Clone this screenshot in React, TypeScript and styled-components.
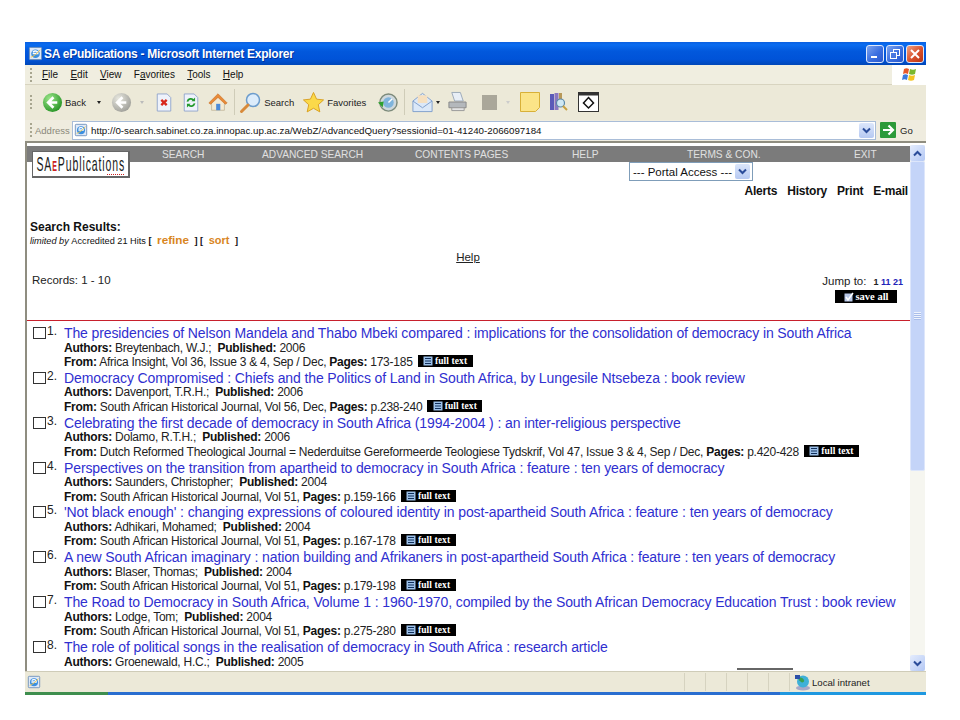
import React from "react";
import styled, { createGlobalStyle } from "styled-components";

const Global = createGlobalStyle`
  html, body { margin: 0; padding: 0; background: #fff; }
  body { font-family: "Liberation Sans", Arial, sans-serif; color: #222; }
`;
const Page = styled.div`
  width: 960px; height: 720px; padding: 42px 34px 0 25px; box-sizing: border-box; overflow: hidden;
`;
const Win = styled.div`
  width: 901px; height: 653px; display: flex; flex-direction: column; background: #ece9d8;
`;
const TitleBar = styled.div`
  height: 23px; flex: none; display: flex; align-items: center; padding: 0 2px 0 3px; box-sizing: border-box;
  background: linear-gradient(180deg, #0a5fe0 0%, #0a6cf0 12%, #0258dc 40%, #0053d8 75%, #0047b8 100%);
`;
const TitleText = styled.div`
  font: bold 12px "Liberation Sans", sans-serif; letter-spacing: -.26px; color: #fff; margin-left: 1px; flex: 1;
  text-shadow: 1px 1px 0 #03339a;
`;
const WinBtns = styled.div` display: flex; gap: 2px; `;
const WinBtn = styled.div<{ $close?: boolean }>`
  width: 18px; height: 18px; box-sizing: border-box; border: 1px solid #dfe8fb; border-radius: 3px; display: flex; align-items: center; justify-content: center;
  background: ${p => p.$close ? "linear-gradient(135deg,#f0a080,#d8502c 55%,#b83414)" : "linear-gradient(135deg,#7ea4ee,#3a6ee0 55%,#2a58cc)"};
`;
const MenuBar = styled.div`
  height: 20px; flex: none; display: flex; align-items: center; font: 10px "Liberation Sans", sans-serif; color: #111;
  border-bottom: 1px solid #d8d4c0; box-sizing: border-box; background: #f0eee0;
`;
const Grip = styled.div`
  width: 2px; height: 14px; margin: 0 10px 0 5px; flex: none;
  background: repeating-linear-gradient(180deg, #a8a690 0 2px, transparent 2px 4px);
`;
const MenuItems = styled.div` display: flex; gap: 12.3px; flex: 1; `;
const MenuItem = styled.span` u { text-decoration: underline; } `;
const Flag = styled.div`
  width: 34px; height: 20px; background: #fff; display: flex; align-items: center; justify-content: center;
`;
const Tools = styled.div`
  height: 35px; flex: none; display: flex; align-items: center; box-sizing: border-box; font: 9.5px "Liberation Sans", sans-serif; color: #222;
  background: #ece9d8; padding-bottom: 1px;
`;
const ToolLabel = styled.span<{ $ml?: number }>` margin-left: ${p => p.$ml ?? 3}px; `;
const Slot = styled.div<{ $w: number; $pl?: number }>`
  width: ${p => p.$w}px; padding-left: ${p => p.$pl ?? 0}px; box-sizing: border-box; flex: none; display: flex; align-items: center; justify-content: center;
`;
const Sep = styled.div` width: 1px; height: 26px; background: #cfccb8; flex: none; `;
const Caret = styled.span<{ $c?: string }>`
  width: 0; height: 0; border: 2.5px solid transparent; border-top: 3px solid ${p => p.$c ?? "#222"}; border-bottom: 0; display: block; flex: none;
`;
const AddressBar = styled.div`
  height: 23px; flex: none; display: flex; align-items: center; font: 9.5px "Liberation Sans", sans-serif; background: #efecdf;
  border-bottom: 2px solid #8f8d80; box-sizing: border-box; padding-bottom: 1px;
`;
const AddrLabel = styled.span` color: #8a887a; width: 35px; flex: none; margin-left: -7px; white-space: nowrap; `;
const AddrInput = styled.div`
  width: 804px; height: 19px; flex: none; box-sizing: border-box; background: #fff; border: 1px solid #a9bdd8; display: flex; align-items: center;
  padding-left: 1px; font: 9.75px "Liberation Sans", sans-serif; color: #111; margin-left: 2px;
`;
const AddrUrl = styled.span` flex: 1; margin-left: 3px; white-space: nowrap; `;
const Combo = styled.div`
  width: 15px; height: 15px; border-radius: 2px; background: linear-gradient(#dbe6fb,#b6c9f2); display: flex; align-items: center; justify-content: center; flex: none;
  margin-right: 1px;
`;
const Go = styled.div` display: flex; align-items: center; gap: 4px; margin-left: 4px; `;
const Body = styled.div`
  flex: 1; min-height: 0; display: flex; background: #fff; border-left: 2px solid #8f8d80; padding-top: 3px; position: relative;
`;
const Content = styled.div` flex: 1; min-width: 0; overflow: hidden; position: relative; `;
const Nav = styled.div`
  height: 16px; background: #7b7b7b; display: flex; color: #e0e0e0; font: 10.2px "Liberation Sans", sans-serif; align-items: center; position: relative;
`;
const NavItem = styled.span<{ $w: number }>` width: ${p => p.$w}px; flex: none; white-space: nowrap; `;
const Logo = styled.div`
  position: absolute; left: 5px; top: 5px; width: 98px; height: 27px; background: #fff; border: 1px solid #666; border-width: 1px 2px 2px 1px; box-sizing: border-box;
  display: flex; align-items: center; justify-content: center; font: 21px "Liberation Sans", sans-serif; color: #1a1a1a;
  overflow: hidden;
`;
const LogoInner = styled.span` display: inline-block; transform: scaleX(.5) scaleY(1); white-space: nowrap; letter-spacing: 1.8px;
  b { color: #c22; font-weight: bold; font-size: 14px; } `;
const LogoDots = styled.span`
  position: absolute; right: 3px; bottom: 1px; width: 18px; height: 1px; background: repeating-linear-gradient(90deg, #c22 0 1px, transparent 1px 2px);
`;
const TopRow = styled.div` height: 20px; display: flex; justify-content: flex-end; padding-right: 157px; `;
const Select = styled.div`
  margin-top: 0; width: 124px; height: 19px; border: 1px solid #7f9db9; box-sizing: border-box; display: flex; align-items: center; justify-content: space-between;
  font: 11.5px "Liberation Sans", sans-serif; color: #111; padding: 0 1px 0 3px; white-space: nowrap;
`;
const Actions = styled.div`
  display: flex; justify-content: flex-end; gap: 10px; padding: 2px 2px 0 0; font: bold 12px "Liberation Sans", sans-serif; color: #111; letter-spacing: -.22px; height: 15px;
`;
const Results = styled.div` padding: 22px 0 0 3px; height: 26px; `;
const ResultsHead = styled.div` font: bold 12px "Liberation Sans", sans-serif; color: #111; line-height: 12px; `;
const Limited = styled.div` font: 9.2px "Liberation Sans", sans-serif; color: #111; line-height: 13px; display: flex; align-items: baseline; white-space: pre;
  i { font-style: italic; } `;
const Refine = styled.span<{ $s: number }>` font: bold ${p => p.$s}px "Liberation Sans", sans-serif; color: #d9861e; margin: 0 3px; `;
const Help = styled.div` text-align: center; font: 11.5px "Liberation Sans", sans-serif; color: #222; text-decoration: underline; padding-top: 4px; height: 18px; margin-left: -1px; `;
const RecordRow = styled.div` display: flex; justify-content: space-between; padding: 0 6px 0 5px; height: 52px; box-sizing: border-box; border-bottom: 1px solid #c8202c; `;
const Records = styled.div` font: 11.5px "Liberation Sans", sans-serif; color: #222; padding-top: 5px; `;
const Jump = styled.div` display: flex; flex-direction: column; align-items: flex-end; padding-top: 6px; font: 11.5px "Liberation Sans", sans-serif; color: #222; `;
const JumpLine = styled.div` display: flex; align-items: baseline; gap: 7px; white-space: nowrap; margin-right: 1px; `;
const JumpNums = styled.span` font: bold 9px "Liberation Sans", sans-serif; color: #2222b8; i { font-style: normal; color: #222; } `;
const SaveAll = styled.div`
  background: #000; color: #fff; font: bold 10.5px "Liberation Serif", serif; height: 13px; width: 62px; display: flex; align-items: center; justify-content: center; gap: 1px;
  margin: 3px 7px 0 0; line-height: 13px;
`;
const List = styled.div` padding-top: 4px; `;
const Row = styled.div`
  height: 44.87px; display: grid; grid-template-columns: 31px 1fr; padding-left: 6px; box-sizing: border-box;
`;
const Check = styled.div` display: flex; align-items: flex-start; font: 12px "Liberation Sans", sans-serif; color: #222; padding-top: 2px; `;
const Box = styled.span` width: 13px; height: 12px; box-sizing: border-box; border: 1px solid #333; display: block; flex: none; background: #fff; `;
const Num = styled.span` line-height: 9px; display: block; margin-left: 1px; `;
const RowBody = styled.div` min-width: 0; white-space: nowrap; `;
const RowTitle = styled.div` font: 14px/17px "Liberation Sans", sans-serif; color: #2f2fd0; letter-spacing: -.11px; height: 15.5px; `;
const RowLine = styled.div` font: 12px/15px "Liberation Sans", sans-serif; color: #222; height: 14.5px; white-space: pre; letter-spacing: -.25px;
  b { color: #111; font-weight: bold; } `;
const FullText = styled.span`
  background: #000; color: #fff; font: bold 9.5px/12px "Liberation Serif", serif; height: 12px; width: 55px; display: inline-flex; align-items: center; justify-content: center; gap: 2px; margin-left: 5px; letter-spacing: .1px; vertical-align: top;
`;
const Scroll = styled.div` width: 15px; flex: none; display: flex; flex-direction: column; background: #f6f6f0; margin-right: 1px; margin-top: -1px; `;
const ScrollBtn = styled.div` height: 16px; flex: none; border-radius: 2px; background: linear-gradient(135deg,#e4ecfd,#b4c8f4); display: flex; align-items: center; justify-content: center; `;
const Thumb = styled.div`
  height: 310px; flex: none; background: #c4d4f8; border: 1px solid #dde6fb; box-sizing: border-box; border-radius: 2px; display: flex; align-items: center; justify-content: center;
`;
const ThumbGrip = styled.div` width: 7px; height: 8px; background: repeating-linear-gradient(180deg, #eef3fd 0 1px, #a9bdea 1px 2px); `;
const Track = styled.div` flex: 1; `;
const Smudge = styled.div` position: absolute; left: 710px; bottom: 1px; width: 56px; height: 2px; background: #666; `;
const Status = styled.div`
  height: 21px; flex: none; display: flex; align-items: center; background: #ece9d8; font: 9.6px "Liberation Sans", sans-serif; color: #222; border-top: 1px solid #cfccb8; box-sizing: border-box;
`;
const StatusMain = styled.div` flex: 1; display: flex; align-items: center; padding-left: 2px; `;
const Cell = styled.div` width: 21px; box-sizing: border-box; height: 18px; border-left: 1px solid #d6d3c0; flex: none; `;
const Zone = styled.div` width: 137px; flex: none; display: flex; align-items: center; gap: 1px; padding-left: 4px; box-sizing: border-box; white-space: nowrap; border-left: 1px solid #d6d3c0; height: 18px; `;
const Bottom = styled.div` height: 3px; flex: none; background: linear-gradient(90deg,#3e8e4e 0 9.2%,#2a6ed0 9.2% 83.8%,#1f98e0 83.8%); `;

const IEIcon = ({ s = 14 }: { s?: number }) => (
  <svg width={s} height={s} viewBox="0 0 16 16"><rect x="1.5" y="1.5" width="13" height="13" rx="1" fill="#dfe9f8" stroke="#6d8fb8" /><circle cx="8" cy="8.3" r="4.6" fill="#3b8fe0" /><path d="M5 8h6.2M5.4 6.5a3 3 0 0 1 5.2.6" stroke="#fff" strokeWidth="1.5" fill="none" /><path d="M3 12c3-1 7-4 10-8" stroke="#f4c84a" strokeWidth="1" fill="none" /></svg>
);
const Arrow = ({ on, dir = 1 }: { on?: boolean; dir?: number }) => (
  <svg width="21" height="21" viewBox="0 0 22 22" style={{ display: "block" }}>
    <defs><radialGradient id={on ? "ga" : "gb"} cx=".35" cy=".3" r=".8"><stop offset="0" stopColor={on ? "#9ce68a" : "#e8e8e0"} /><stop offset="1" stopColor={on ? "#1e8e1e" : "#9a9a94"} /></radialGradient></defs>
    <circle cx="11" cy="11" r="10" fill={`url(#${on ? "ga" : "gb"})`} />
    <path d={dir > 0 ? "M12 5.500 6.500 11l5.500 5.500M7 11h9" : "M10 5.500 15.500 11 10 16.500M15 11H6"} stroke="#fff" strokeWidth="2.8" fill="none" />
  </svg>
);
const Doc = ({ kind }: { kind: "stop" | "refresh" }) => (
  <svg width="18" height="21" viewBox="0 0 20 22" style={{ display: "block" }}>
    <path d="M2.500 1.500h11l4 4v15h-15z" fill="#eef2fb" stroke="#8fa4cc" />
    {kind === "stop"
      ? <path d="M7 8l6 6M13 8l-6 6" stroke="#d8261c" strokeWidth="2.600" />
      : <g fill="none" stroke="#239a2e" strokeWidth="2"><path d="M6 10a4 4 0 0 1 7-1.500" /><path d="M14 12a4 4 0 0 1-7 1.500" /><path d="M14.500 5.500v4h-4z" fill="#239a2e" stroke="none" /><path d="M5.500 16.500v-4h4z" fill="#239a2e" stroke="none" /></g>}
  </svg>
);
const Home = () => (
  <svg width="22" height="22" viewBox="0 0 24 24" style={{ display: "block" }}>
    <path d="M5 12v9h14v-9l-7-6z" fill="#f3ead4" stroke="#b4a888" strokeWidth=".7" />
    <path d="M2 13 12 3l10 10-2 1.500-8-7.500-8 7.500z" fill="#e88a38" stroke="#c46a20" strokeWidth=".6" />
    <rect x="10" y="14" width="4.500" height="7" fill="#4c8ad8" />
  </svg>
);
const SearchIco = () => (
  <svg width="23" height="23" viewBox="0 0 23 23" style={{ display: "block" }}>
    <circle cx="14" cy="9" r="6.500" fill="#dcecfb" stroke="#6c9ccc" strokeWidth="1.500" />
    <path d="M9 14 2.500 20.500" stroke="#d88a3a" strokeWidth="3" strokeLinecap="round" />
  </svg>
);
const Star = () => (
  <svg width="23" height="23" viewBox="0 0 24 24" style={{ display: "block" }}>
    <path d="M12 1.500l3.200 7 7.300.8-5.500 5 1.600 7.500L12 18l-6.600 3.800L7 14.300l-5.500-5 7.300-.8z" fill="#fbd94a" stroke="#d8a020" />
  </svg>
);
const Media = () => (
  <svg width="21" height="21" viewBox="0 0 22 22" style={{ display: "block" }}>
    <circle cx="12" cy="11" r="9" fill="#cfd8dc" stroke="#7c8a7a" strokeWidth="1.500" />
    <circle cx="12" cy="11" r="5.500" fill="#7fb4dc" />
    <path d="M12 11l4-4" stroke="#fff" strokeWidth="1.500" />
    <path d="M1 11l5 5 1-6z" fill="#2ea02e" />
  </svg>
);
const Mail = () => (
  <svg width="23" height="22" viewBox="0 0 24 22" style={{ display: "block" }}>
    <path d="M2 10 12 2l10 8v11H2z" fill="#dbe8f8" stroke="#7f9fcc" />
    <rect x="7" y="4" width="10" height="8" fill="#f6e0c0" />
    <path d="M2 10l10 7 10-7" fill="none" stroke="#7f9fcc" />
  </svg>
);
const Printer = () => (
  <svg width="21" height="22" viewBox="0 0 22 22" style={{ display: "block" }}>
    <path d="M5 1h9l3 9H8z" fill="#e8eef6" stroke="#9aa8b8" />
    <path d="M2 11h18v6H2z" fill="#b4b8bc" stroke="#888" />
    <path d="M5 17h13v3H5z" fill="#e4e4e4" stroke="#999" />
  </svg>
);
const Note = () => (
  <svg width="20" height="20" viewBox="0 0 20 20" style={{ display: "block" }}>
    <path d="M.5.500h19v15l-4 4H.5z" fill="#fbe488" stroke="#d8b038" />
  </svg>
);
const Research = () => (
  <svg width="20" height="20" viewBox="0 0 20 20" style={{ display: "block" }}>
    <rect x="1" y="2" width="4" height="16" fill="#5a5ab8" />
    <rect x="5.500" y="1" width="4" height="17" fill="#8a78c0" />
    <rect x="10" y="1" width="3" height="9" fill="#b89858" />
    <circle cx="11.500" cy="11" r="4" fill="#cfe8f4" stroke="#5a88a8" strokeWidth="1.200" />
    <path d="M14 14l4 4" stroke="#c8a040" strokeWidth="2" />
  </svg>
);
const Diamond = () => (
  <svg width="21" height="20" viewBox="0 0 21 20" style={{ display: "block" }}>
    <rect x=".5" y=".5" width="20" height="19" fill="#fff" stroke="#333" />
    <rect x=".5" y=".5" width="20" height="3" fill="#333" />
    <path d="M10.500 5.500 15.500 11l-5 5-5-5z" fill="#fff" stroke="#111" strokeWidth="1.500" />
  </svg>
);
const Chevron = ({ c = "#2a4c9a" }: { c?: string }) => (
  <svg width="9" height="7" viewBox="0 0 9 7"><path d="M1 1.500 4.500 5 8 1.500" fill="none" stroke={c} strokeWidth="2" /></svg>
);
const ChevronUp = () => (
  <svg width="9" height="7" viewBox="0 0 9 7"><path d="M1 5.500 4.500 2 8 5.500" fill="none" stroke="#2a4c9a" strokeWidth="2" /></svg>
);
const WinFlag = () => (
  <svg width="17" height="17" viewBox="0 0 17 17">
    <path d="M3 3c2-1 3-1 5 0L7 8C5 7 4 7 2 8z" fill="#e8582a" />
    <path d="M9 3c2 1 4 1 6 0l-1 5c-2 1-4 1-6 0z" fill="#7ab82e" />
    <path d="M2 9c2-1 3-1 5 0l-1 5c-2-1-3-1-5 0z" fill="#3a7ae0" />
    <path d="M8 9c2 1 4 1 6 0l-1 5c-2 1-4 1-6 0z" fill="#f4c420" />
  </svg>
);
const GoBtn = () => (
  <svg width="16" height="16" viewBox="0 0 16 16" style={{ display: "block" }}><rect width="16" height="16" rx="1" fill="#2c9a3a" /><path d="M3 8h9M8.500 3.500 13 8l-4.500 4.500" stroke="#fff" strokeWidth="2.200" fill="none" /></svg>
);
const Globe = () => (
  <svg width="17" height="17" viewBox="0 0 17 17" style={{ display: "block" }}>
    <ellipse cx="9" cy="14" rx="7" ry="2.500" fill="#a8a8c8" /><circle cx="9" cy="7.500" r="6" fill="#3fb0d8" /><path d="M5 4c2-1 4 0 5 2s-2 3-3 2-3-2-2-4z" fill="#3aa050" /><rect x="1" y="1" width="5" height="4" fill="#2c50a8" />
  </svg>
);
const TextIco = () => (
  <svg width="10" height="10" viewBox="0 0 10 10" style={{ display: "block" }}>
    <rect x=".5" y=".5" width="9" height="9" fill="#9cc0e8" /><path d="M2 2.500h6M2 5h6M2 7.500h6" stroke="#11305c" />
  </svg>
);
const SaveIco = () => (
  <svg width="11" height="10" viewBox="0 0 11 10" style={{ display: "block" }}>
    <rect x=".5" y="1.500" width="8" height="8" fill="#b8c8e8" /><path d="M2 5l2 3 5-7" stroke="#fff" strokeWidth="1.500" fill="none" />
  </svg>
);

const items = [
  { t: "The presidencies of Nelson Mandela and Thabo Mbeki compared : implications for the consolidation of democracy in South Africa", a: "Breytenbach, W.J.;", y: "2006", f: "Africa Insight, Vol 36, Issue 3 & 4, Sep / Dec,", p: "173-185" },
  { t: "Democracy Compromised : Chiefs and the Politics of Land in South Africa, by Lungesile Ntsebeza : book review", a: "Davenport, T.R.H.;", y: "2006", f: "South African Historical Journal, Vol 56, Dec,", p: "p.238-240" },
  { t: "Celebrating the first decade of democracy in South Africa (1994-2004 ) : an inter-religious perspective", a: "Dolamo, R.T.H.;", y: "2006", f: "Dutch Reformed Theological Journal = Nederduitse Gereformeerde Teologiese Tydskrif, Vol 47, Issue 3 & 4, Sep / Dec,", p: "p.420-428" },
  { t: "Perspectives on the transition from apartheid to democracy in South Africa : feature : ten years of democracy", a: "Saunders, Christopher;", y: "2004", f: "South African Historical Journal, Vol 51,", p: "p.159-166" },
  { t: "'Not black enough' : changing expressions of coloured identity in post-apartheid South Africa : feature : ten years of democracy", a: "Adhikari, Mohamed;", y: "2004", f: "South African Historical Journal, Vol 51,", p: "p.167-178" },
  { t: "A new South African imaginary : nation building and Afrikaners in post-apartheid South Africa : feature : ten years of democracy", a: "Blaser, Thomas;", y: "2004", f: "South African Historical Journal, Vol 51,", p: "p.179-198" },
  { t: "The Road to Democracy in South Africa, Volume 1 : 1960-1970, compiled by the South African Democracy Education Trust : book review", a: "Lodge, Tom;", y: "2004", f: "South African Historical Journal, Vol 51,", p: "p.275-280" },
  { t: "The role of political songs in the realisation of democracy in South Africa : research article", a: "Groenewald, H.C.;", y: "2005", f: "", p: "" },
];

const navs: [string, number][] = [["SEARCH", 100], ["ADVANCED SEARCH", 153], ["CONTENTS PAGES", 157], ["HELP", 115], ["TERMS & CON.", 167], ["EXIT", 40]];

export default function App() {
  return (
    <Page>
      <Global />
      <Win>
        <TitleBar>
          <IEIcon s={15} />
          <TitleText>SA ePublications - Microsoft Internet Explorer</TitleText>
          <WinBtns>
            <WinBtn><svg width="10" height="10"><rect x="1" y="7" width="6" height="2" fill="#fff" /></svg></WinBtn>
            <WinBtn><svg width="12" height="12" fill="none" stroke="#fff"><rect x="4.500" y="1.500" width="6" height="6" /><rect x="1.500" y="4.500" width="6" height="6" fill="#4a78e0" /></svg></WinBtn>
            <WinBtn $close><svg width="12" height="12"><path d="M2 2l8 8M10 2l-8 8" stroke="#fff" strokeWidth="2" /></svg></WinBtn>
          </WinBtns>
        </TitleBar>
        <MenuBar>
          <Grip />
          <MenuItems>
            <MenuItem><u>F</u>ile</MenuItem>
            <MenuItem><u>E</u>dit</MenuItem>
            <MenuItem><u>V</u>iew</MenuItem>
            <MenuItem>F<u>a</u>vorites</MenuItem>
            <MenuItem><u>T</u>ools</MenuItem>
            <MenuItem><u>H</u>elp</MenuItem>
          </MenuItems>
          <Flag><WinFlag /></Flag>
        </MenuBar>
        <Tools>
          <Grip />
          <Arrow on />
          <ToolLabel $ml={2}>Back</ToolLabel>
          <Slot $w={25}><Caret /></Slot>
          <Arrow />
          <Slot $w={19}><Caret $c="#bbb" /></Slot>
          <Slot $w={25}><Doc kind="stop" /></Slot>
          <Slot $w={29}><Doc kind="refresh" /></Slot>
          <Slot $w={25}><Home /></Slot>
          <Slot $w={9}><Sep /></Slot>
          <SearchIco />
          <ToolLabel $ml={2}>Search</ToolLabel>
          <Slot $w={33} $pl={6}><Star /></Slot>
          <ToolLabel $ml={0}>Favorites</ToolLabel>
          <Slot $w={34} $pl={8}><Media /></Slot>
          <Slot $w={9}><Sep /></Slot>
          <Slot $w={27}><Mail /></Slot>
          <Caret />
          <Slot $w={32} $pl={3}><Printer /></Slot>
          <Slot $w={34}><svg width="15" height="15"><rect width="15" height="15" fill="#aaa79a" /></svg></Slot>
          <Caret $c="#ccc" />
          <Slot $w={35} $pl={4}><Note /></Slot>
          <Slot $w={27}><Research /></Slot>
          <Slot $w={29} $pl={4}><Diamond /></Slot>
        </Tools>
        <AddressBar>
          <Grip />
          <AddrLabel>Address</AddrLabel>
          <AddrInput>
            <IEIcon s={14} />
            <AddrUrl>http://0-search.sabinet.co.za.innopac.up.ac.za/WebZ/AdvancedQuery?sessionid=01-41240-2066097184</AddrUrl>
            <Combo><Chevron /></Combo>
          </AddrInput>
          <Go><GoBtn /><span>Go</span></Go>
        </AddressBar>
        <Body>
          <Content>
            <Nav>
              <NavItem $w={135} />
              {navs.map(([n, w]) => <NavItem key={n} $w={w}>{n}</NavItem>)}
            </Nav>
            <Logo><LogoInner>SA<b>E</b>Publications</LogoInner><LogoDots /></Logo>
            <TopRow>
              <Select>--- Portal Access --- <Combo><Chevron /></Combo></Select>
            </TopRow>
            <Actions><span>Alerts</span><span>History</span><span>Print</span><span>E-mail</span></Actions>
            <Results>
              <ResultsHead>Search Results:</ResultsHead>
              <Limited><i>limited by </i>Accredited 21 Hits <b>[ </b><Refine $s={11.7}>refine</Refine><b> ] [ </b><Refine $s={11}>sort</Refine><b> ]</b></Limited>
            </Results>
            <Help>Help</Help>
            <RecordRow>
              <Records>Records: 1 - 10</Records>
              <Jump>
                <JumpLine>Jump to: <JumpNums><i>1</i> 11 21</JumpNums></JumpLine>
                <SaveAll><SaveIco /> save all</SaveAll>
              </Jump>
            </RecordRow>
            <List>
              {items.map((it, i) => (
                <Row key={i}>
                  <Check><Box /><Num>{i + 1}.</Num></Check>
                  <RowBody>
                    <RowTitle>{it.t}</RowTitle>
                    <RowLine><b>Authors:</b> {it.a}  <b>Published:</b> {it.y}</RowLine>
                    {it.f && <RowLine><b>From:</b> {it.f} <b>Pages:</b> {it.p}<FullText><TextIco />full text</FullText></RowLine>}
                  </RowBody>
                </Row>
              ))}
            </List>
            <Smudge />
          </Content>
          <Scroll>
            <ScrollBtn><ChevronUp /></ScrollBtn>
            <Thumb><ThumbGrip /></Thumb>
            <Track />
            <ScrollBtn><Chevron /></ScrollBtn>
          </Scroll>
        </Body>
        <Status>
          <StatusMain><IEIcon s={14} /></StatusMain>
          <Cell /><Cell /><Cell /><Cell /><Cell />
          <Zone><Globe />Local intranet</Zone>
        </Status>
        <Bottom />
      </Win>
    </Page>
  );
}
